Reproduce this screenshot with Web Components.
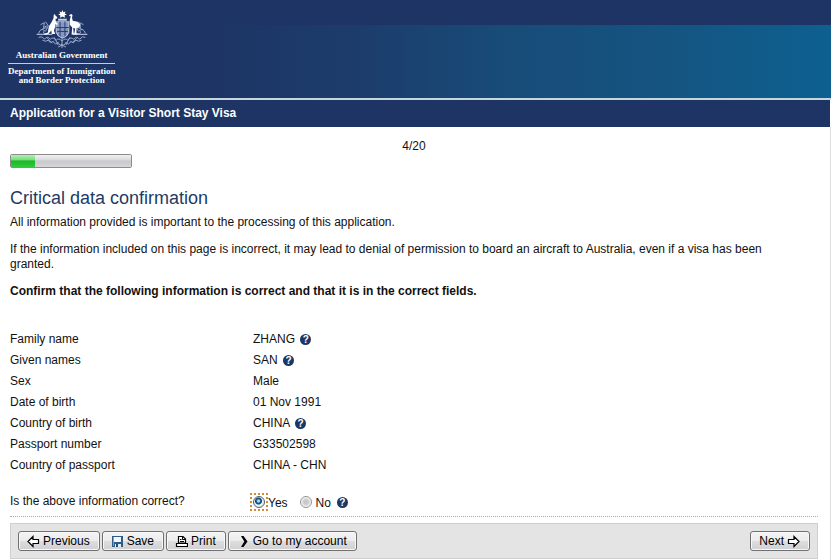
<!DOCTYPE html>
<html lang="en">
<head>
<meta charset="utf-8">
<title>Application for a Visitor Short Stay Visa</title>
<style>
    body {
        margin: 0;
        background: #fff;
        color: #111;
        font: 12px/15px "Liberation Sans", Arial, sans-serif;
    }
</style>
</head>
<body>
<visa-app></visa-app>

<script>
const icons = {
    back: '<svg width="13" height="13" viewBox="0 0 13 13"><path d="M1 6.500L6 1.500V4.500H11.500V8.500H6V11.500Z" fill="#fff" stroke="#000" stroke-width="1.2"/></svg>',
    next: '<svg width="13" height="13" viewBox="0 0 13 13"><path d="M12 6.500L7 1.500V4.500H1.500V8.500H7V11.500Z" fill="#fff" stroke="#000" stroke-width="1.2"/></svg>',
    save: '<svg width="13" height="13" viewBox="0 0 13 13"><path d="M1 1H12V12H1Z" fill="#2f5c86"/><path d="M2 2H3V11H2Z" fill="#7fa3bf"/><path d="M3 2H10V7H3Z" fill="#f1f6fa"/><path d="M4 9H10V12H4Z" fill="#e3ebf1"/><path d="M5 9H7V12H5Z" fill="#244d75"/></svg>',
    print: '<svg width="13" height="13" viewBox="0 0 13 13"><path d="M3.500 8V1.500H8L10.500 4V8Z" fill="#fff" stroke="#000" stroke-width="1.2"/><path d="M7.500 1.500V4.500H10M5 4.500H6.500M5 6.500H9" fill="none" stroke="#000"/><path d="M3 8.500H1.500V11.500H12.500V8.500H11" fill="#fff" stroke="#000" stroke-width="1.2"/><path d="M1.500 8.500H12.500" stroke="#000"/></svg>',
    account: '<svg width="13" height="13" viewBox="0 0 13 13"><path d="M4 1H6.500L10.500 6.500L6.500 12H4L7.300 6.500Z" fill="#000"/></svg>'
};

function define(name, html) {
    const template = document.createElement('template');
    template.innerHTML = html;
    customElements.define(name, class extends HTMLElement {
        constructor() {
            super();
            this.attachShadow({mode: 'open'});
            this.shadowRoot.appendChild(template.content.cloneNode(true));
        }
    });
}

// Coat of arms: shield between kangaroo and emu, wattle around and below
define('gov-crest', `
<style>
    :host { display: block; height: 39px; }
    svg { display: block; }
</style>
<svg width="54" height="39" viewBox="0 0 54 40" aria-hidden="true">
    <g fill="none" stroke="#a9b8d8" stroke-width="0.9">
        <path d="M3 24Q5 18 9 21Q6 25 12 24M5 15L9 13L8 18L12 16M6 20L11 18M10 12L13 16L10 22"/>
        <path d="M51 24Q49 18 45 21Q48 25 42 24M49 15L45 13L46 18L42 16M48 20L43 18M44 12L41 16L44 22"/>
        <path d="M1 25H17M38 25H53" stroke-width="1.2"/>
        <path d="M3 28Q7 26 9 30Q12 26 15 30Q18 27 21 31Q24 28 27 32Q30 28 33 31Q36 27 39 30Q42 26 45 30Q48 26 51 28"/>
        <path d="M7 31Q10 33 13 31Q15 35 18 32Q20 37 23 33Q25 38 27 35Q29 38 31 33Q34 37 36 32Q39 35 41 31Q44 33 47 31"/>
        <path d="M12 29L17 34M19 28L23 36M42 29L37 34M35 28L31 36M27 29V39M23 38L27 36L31 38" />
    </g>
    <path d="M21 12H34V23Q33 27 27.500 29Q22 27 21 23Z" fill="#8798c0" stroke="#dbe2f0" stroke-width="0.8"/>
    <path d="M21 18H34M25 12V27M30 12V27M22 22H33" stroke="#24396d" stroke-width="1"/>
    <path d="M23 9H32V11H23Z" fill="#c6d0e5"/>
    <path d="M27.500 0L28.400 2.300L30.700 1.500L29.800 3.700L32 4.800L29.700 5.500L30 8L27.500 6.700L25 8L25.300 5.500L23 4.800L25.200 3.700L24.300 1.500L26.600 2.300Z" fill="#fff"/>
    <path d="M18.500 5L19.500 4L20.500 6L22.300 7.500L21.500 9L20.300 9.200L21 13L23 14L22.500 15L20 14.500L20.200 17L18.700 21L20 24.500H16.500L16 21L13 24.500L9 25.500V24.500L12.500 23L13.500 17L16.500 12L18.300 8.500Z" fill="#fff"/>
    <path d="M34.500 5L36.500 4L37.800 5.200L37.300 8L38 11L43 12L46 15L44.500 18L42 18.500L41.800 24H43V25H39.500L40.500 19L38.500 18.500L39 24H40V25H36.800L37.500 18L35 15L34.800 11L36 6.500L34.500 6.200Z" fill="#fff"/>
</svg>
`);

define('gov-header', `
<style>
    :host {
        display: flex;
        height: 98px;
        padding-left: 8px;
        border-bottom: 2px solid #c4d7dc;
        background: linear-gradient(to right, #1d3464 25%, #1c3e6d 45%, #184b78 60%, #155481 80%, #0d6090) 0 25px no-repeat #1d3464;
        color: #fff;
        font: bold 9px/9px "Liberation Serif", "Times New Roman", serif;
        text-align: center;
    }
    .brand { display: flex; flex-direction: column; align-items: center; padding-top: 10px; }
    .gov { line-height: 12px; }
    .dept { margin-top: 2px; padding-top: 3px; border-top: 1px solid #c2cce0; }
</style>
<div class="brand">
    <gov-crest></gov-crest>
    <div class="gov">Australian Government</div>
    <div class="dept">Department of Immigration<br>and Border Protection</div>
</div>
`);

define('title-bar', `
<style>
    :host { display: block; margin-right: 1px; background: #1d3464; color: #fff; }
    h1 { margin: 0; padding: 6px 10px; font-size: 12px; line-height: 15px; }
</style>
<h1><slot></slot></h1>
`);

define('step-progress', `
<style>
    :host { display: block; padding-top: 11px; }
    label { display: block; text-align: center; }
    progress {
        display: block;
        width: 122px;
        height: 14px;
        box-sizing: border-box;
        border: 1px solid #8c8c8c;
        border-radius: 2px;
        appearance: none;
        background: none;
        overflow: hidden;
    }
    progress::-webkit-progress-bar {
        background: linear-gradient(#f0f0f0, #dcdcde 40%, #c9c9cd 50%, #d6d6da);
    }
    progress::-webkit-progress-value {
        background: linear-gradient(#b5efb7, #77df7a 40%, #1db72b 50%, #2ccc3a);
    }
</style>
<label for="step">4/20</label>
<progress id="step" value="4" max="20"></progress>
`);

define('help-tip', `
<style>
    :host { display: inline-flex; vertical-align: top; margin-left: 2px; }
    button {
        width: 11px;
        height: 11px;
        padding: 0;
        border: 0;
        border-radius: 50%;
        background: #1c3766;
        color: #fff;
        font: bold 10px/11px "Liberation Sans", Arial, sans-serif;
        cursor: pointer;
    }
</style>
<button type="button" aria-label="Help">?</button>
`);

define('data-row', `
<style>
    :host { display: grid; grid-template-columns: 243px 1fr; line-height: 21px; }
    ::slotted(help-tip) { margin-top: 5px; }
</style>
<div><slot name="label"></slot></div>
<div><slot></slot></div>
`);

define('confirm-question', `
<style>
    :host { display: block; border-bottom: 1px dotted #aaa; }
    fieldset {
        display: grid;
        grid-template-columns: 241px 1fr;
        margin: 0;
        padding: 0 0 5px;
        border: 0;
    }
    #question { padding-top: 1px; }
    .options { display: flex; align-items: center; }
    label { padding: 3px 10px 0 1px; }
    label[for=no] { padding: 3px 4px 0 2px; }
    .radio { display: flex; padding: 2px; }
    .radio:has(:checked) { outline: 2px dotted #cf8a3c; outline-offset: -1px; }
    input {
        width: 12px;
        height: 12px;
        margin: 0;
        appearance: none;
        border: 1px solid #929292;
        border-radius: 50%;
        background: radial-gradient(circle, #c9c9c9 0 2px, #e4e4e4 4px, #fff 5px);
    }
    input:checked {
        border-color: #52606c;
        background: radial-gradient(circle at 45% 40%, #a5e0f7 0 1px, #236a9b 2px, #163f68 3px, #e9f0f5 4px);
    }
</style>
<fieldset aria-labelledby="question">
    <div id="question">Is the above information correct?</div>
    <div class="options">
        <span class="radio"><input type="radio" name="correct" id="yes" checked></span><label for="yes">Yes</label>
        <span class="radio"><input type="radio" name="correct" id="no"></span><label for="no">No</label>
        <help-tip></help-tip>
    </div>
</fieldset>
`);

class ToolButton extends HTMLElement {
    connectedCallback() {
        if (this.shadowRoot) return;
        this.attachShadow({mode: 'open'});
        const icon = icons[this.getAttribute('icon')];
        const text = '<span><slot></slot></span>';
        this.shadowRoot.innerHTML = `
<style>
    :host { display: block; }
    button {
        display: flex;
        align-items: center;
        gap: 3px;
        height: 20px;
        padding: 0 9px 0 8px;
        border: 1px solid #707070;
        border-radius: 3px;
        background: linear-gradient(#f4f4f4, #ececec 48%, #dddddf 52%, #d0d0d4);
        box-shadow: inset 0 0 0 1px #f8f8f8;
        color: #000;
        font: inherit;
        white-space: nowrap;
    }
</style>
<button type="button">${this.hasAttribute('trailing') ? text + icon : icon + text}</button>`;
    }
}
customElements.define('tool-button', ToolButton);

define('tool-bar', `
<style>
    :host {
        display: flex;
        gap: 2px;
        margin-top: 6px;
        padding: 7px;
        border: 1px solid #cfcfcf;
        background: #e5e4e5;
    }
    ::slotted([slot=end]) { margin-left: auto; }
</style>
<slot></slot><slot name="end"></slot>
`);

define('visa-app', `
<style>
    :host { display: block; }
    main { padding: 1px 12px 2px 10px; border-right: 1px solid #ddd; }
    h2 { margin: 19px 0 0; color: #1d3b66; font-size: 18px; font-weight: normal; line-height: 22px; }
    p { margin: 0 0 12px; padding-right: 24px; }
    h2 + p { margin-top: 6px; }
    .details { margin: 30px 0 17px; }
</style>
<gov-header></gov-header>
<title-bar>Application for a Visitor Short Stay Visa</title-bar>
<main>
    <step-progress></step-progress>
    <h2>Critical data confirmation</h2>
    <p>All information provided is important to the processing of this application.</p>
    <p>If the information included on this page is incorrect, it may lead to denial of permission to board an aircraft to Australia, even if a visa has been granted.</p>
    <p><b>Confirm that the following information is correct and that it is in the correct fields.</b></p>
    <div class="details">
        <data-row><span slot="label">Family name</span>ZHANG <help-tip></help-tip></data-row>
        <data-row><span slot="label">Given names</span>SAN <help-tip></help-tip></data-row>
        <data-row><span slot="label">Sex</span>Male</data-row>
        <data-row><span slot="label">Date of birth</span>01 Nov 1991</data-row>
        <data-row><span slot="label">Country of birth</span>CHINA <help-tip></help-tip></data-row>
        <data-row><span slot="label">Passport number</span>G33502598</data-row>
        <data-row><span slot="label">Country of passport</span>CHINA - CHN</data-row>
    </div>
    <confirm-question></confirm-question>
    <tool-bar>
        <tool-button icon="back">Previous</tool-button>
        <tool-button icon="save">Save</tool-button>
        <tool-button icon="print">Print</tool-button>
        <tool-button icon="account">Go to my account</tool-button>
        <tool-button icon="next" trailing slot="end">Next</tool-button>
    </tool-bar>
</main>
`);
</script>
</body>
</html>
